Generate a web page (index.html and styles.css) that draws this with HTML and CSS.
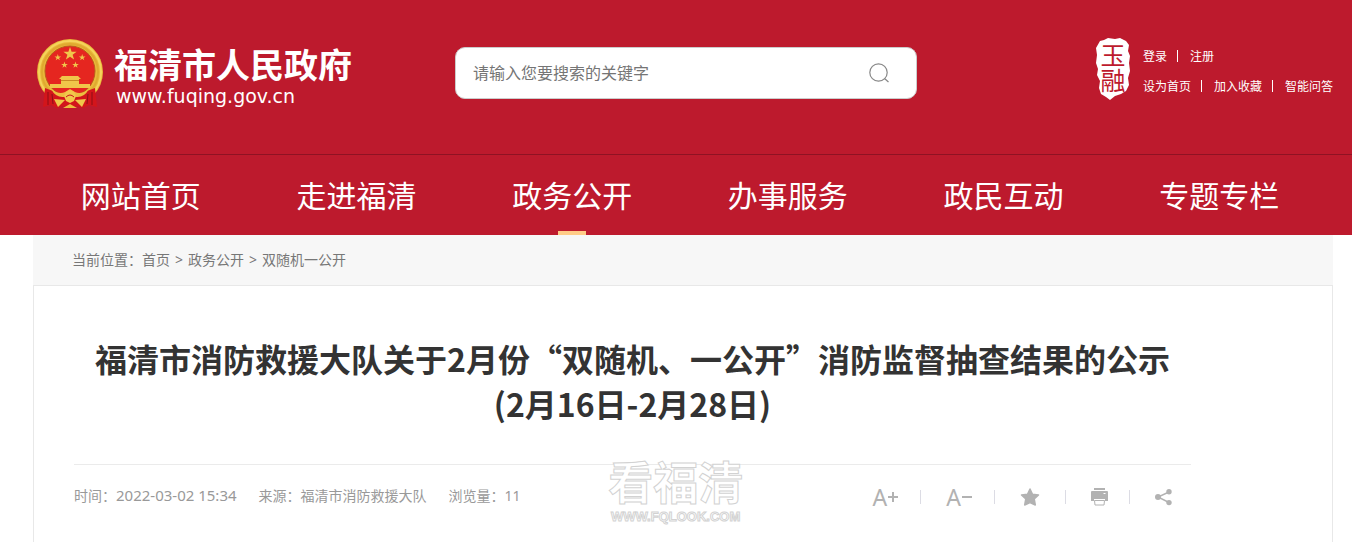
FILE: index.html
```
<!DOCTYPE html>
<html lang="zh-CN">
<head>
    <meta charset="UTF-8">
    <meta name="viewport" content="width=device-width, initial-scale=1.0">
    <title>福清市人民政府</title>
    <link rel="stylesheet" href="styles.css">
</head>
<body>
    <header class="header">
        <div class="header-top">
            <a class="logo" href="#">
                <svg class="emblem" viewBox="0 0 68 72" aria-hidden="true">
                    <circle cx="34" cy="34" r="33" fill="#e9b93a"/>
                    <circle cx="34" cy="34" r="31" fill="none" stroke="#f5d35c" stroke-width="2"/>
                    <circle cx="34" cy="34" r="28" fill="none" stroke="#dfa930" stroke-width="2"/>
                    <circle cx="34" cy="33" r="25" fill="#e52620" stroke="#bb5a1b"/>
                    <g fill="#f0c64a">
                        <path id="star" d="M34 9 L35.6 13.8 H40.6 L36.6 16.8 L38.1 21.6 L34 18.7 L29.9 21.6 L31.4 16.8 L27.4 13.8 H32.4 Z"/>
                        <use href="#star" transform="translate(4.8 11.5) scale(.5)"/>
                        <use href="#star" transform="translate(29.2 11.5) scale(.5)"/>
                        <use href="#star" transform="translate(11.5 19) scale(.5)"/>
                        <use href="#star" transform="translate(22.5 19) scale(.5)"/>
                        <path d="M26 38 H42 L45 41 H23 Z M25 41 H43 V46 H54 V50 H14 V46 H25 Z"/>
                    </g>
                    <path d="M25 42.5 H43" stroke="#c98a24"/>
                    <path d="M9 50 L17 53 Q22 58 28 58 L34 56 L40 58 Q46 58 51 53 L59 50 L61 69 L53 67 L47 70 L41 68 L34 71 L27 68 L21 70 L15 67 L7 69 Z" fill="#d3151b"/>
                    <path d="M12 54 L12 67 M16 56 L17 66 M52 56 L51 66 M56 54 L56 67" stroke="#8d0f16" stroke-width="1"/>
                    <path d="M15 51 Q23 57 29 54 L34 51 L39 54 Q45 57 53 51 Q48 60 40 59 L34 57 L28 59 Q20 60 15 51 Z" fill="#edbd40"/>
                    <path d="M18 61 L29 62 L22 69 Z M50 61 L39 62 L46 69 Z" fill="#f0c64a"/>
                    <path d="M28 58 L30 54 L34 52 L38 54 L40 58 L38 63 L34 65 L30 63 Z" fill="#f2c84b"/>
                    <path d="M30 59 Q34 55 38 59" fill="none" stroke="#c9151b"/>
                    <path d="M27 70 L34 66 L41 70 Z" fill="#edbd40"/>
                </svg>
                <span class="logo-text">
                    <span class="logo-name">福清市人民政府</span>
                    <span class="logo-url">www.fuqing.gov.cn</span>
                </span>
            </a>

            <form class="search">
                <input type="text" class="search-input" placeholder="请输入您要搜索的关键字" aria-label="搜索">
                <button type="submit" class="search-btn" aria-label="搜索">
                    <svg width="22" height="20" viewBox="0 0 22 20" fill="none" stroke="#888" stroke-width="1.2">
                        <circle cx="10.5" cy="9.5" r="8.7"/>
                        <path d="M16.5 15.5 L20.5 19"/>
                    </svg>
                </button>
            </form>

            <div class="header-right">
                <svg class="seal" viewBox="0 0 36 62" role="img" aria-label="玉融">
                    <path d="M5 3 L9 2 L13 0 L20 1 L25 0 L31 3 L34 7 L33 13 L35 18 L34 25 L35 33 L33 40 L34 47 L31 53 L26 56 L20 58 L15 62 L11 59 L6 56 L4 50 L5 43 L2 37 L3 31 L1 25 L2 17 L1 10 Z" fill="#fff"/>
                    <text x="18" y="27" text-anchor="middle">玉</text>
                    <text x="18" y="52" text-anchor="middle">融</text>
                </svg>
                <div class="top-links">
                    <div class="link-row">
                        <a href="#">登录</a><i></i><a href="#">注册</a>
                    </div>
                    <div class="link-row">
                        <a href="#">设为首页</a><i></i><a href="#">加入收藏</a><i></i><a href="#">智能问答</a>
                    </div>
                </div>
            </div>
        </div>

        <nav class="nav">
            <a href="#">网站首页</a>
            <a href="#">走进福清</a>
            <a href="#" class="active">政务公开</a>
            <a href="#">办事服务</a>
            <a href="#">政民互动</a>
            <a href="#">专题专栏</a>
        </nav>
    </header>

    <main class="container">
        <div class="breadcrumb">
            当前位置：<a href="#">首页</a><span>&gt;</span><a href="#">政务公开</a><span>&gt;</span><a href="#">双随机一公开</a>
        </div>
        <article class="article">
            <h1>福清市消防救援大队关于2月份“双随机、一公开”消防监督抽查结果的公示<br>(2月16日-2月28日)</h1>
            <div class="info">
                <div class="meta">
                    <span>时间：<time>2022-03-02 15:34</time></span>
                    <span>来源：福清市消防救援大队</span>
                    <span>浏览量：11</span>
                </div>
                <div class="tools">
                    <button type="button" aria-label="放大字体">A<svg width="12" height="12" viewBox="0 0 12 12" stroke="#b2b2b2" stroke-width="2"><path d="M1 6 H11 M6 1 V11"/></svg></button>
                    <button type="button" aria-label="缩小字体">A<svg width="12" height="12" viewBox="0 0 12 12" stroke="#b2b2b2" stroke-width="2"><path d="M1 6 H11"/></svg></button>
                    <button type="button" aria-label="收藏">
                        <svg width="24" height="20" viewBox="0 0 24 20" fill="#b2b2b2" stroke="#b2b2b2" stroke-width="1.5" stroke-linejoin="round"><path d="M10 2 L12.5 7.2 L18.5 8 L14.2 12 L15.3 18 L10 15.6 L4.7 18 L5.8 12 L1.5 8 L7.5 7.2 Z"/></svg>
                    </button>
                    <button type="button" aria-label="打印">
                        <svg width="17" height="18" viewBox="0 0 17 18" fill="#b2b2b2"><path d="M3 0 H14 V2 H3 Z M1 3 H16 Q17 3 17 4 V13 H14 V11 H3 V13 H0 V4 Q0 3 1 3 Z"/><path d="M3.5 12.5 H13.5 L13 17 H4 Z" fill="none" stroke="#b2b2b2"/><path d="M12.5 5.5 H14.5" stroke="#fff"/></svg>
                    </button>
                    <button type="button" aria-label="分享">
                        <svg width="17" height="18" viewBox="0 0 17 18" fill="#b2b2b2"><path d="M14 4 L3 9 L14 14.5" fill="none" stroke="#b2b2b2" stroke-width="1.4"/><circle cx="3" cy="9" r="3"/><circle cx="14" cy="3.7" r="2.7"/><circle cx="14" cy="14.6" r="2.7"/></svg>
                    </button>
                </div>
                <div class="watermark">
                    <span class="watermark-name">看福清</span>
                    <span class="watermark-url">WWW.FQLOOK.COM</span>
                </div>
            </div>
        </article>
    </main>
</body>
</html>
```
FILE: styles.css
```
* {
    box-sizing: border-box;
}

body {
    margin: 0;
    background-color: #fff;
    color: #333;
    font-family: "Noto Sans", "Noto Sans CJK SC", sans-serif;
    font-size: 14px;
}

a {
    color: inherit;
    text-decoration: none;
}

button {
    padding: 0;
    border: none;
    background: none;
    cursor: pointer;
}

/* Header */
.header {
    background-color: #bd1a2d;
    color: #fff;
}

.header-top {
    display: flex;
    align-items: flex-start;
    height: 154px;
    padding: 38px 19px 0 36px;
}

.logo {
    display: flex;
    width: 419px;
    gap: 10px;
}

.emblem {
    width: 68px;
    height: 72px;
}

.logo-text {
    display: flex;
    flex-direction: column;
    padding-top: 4px;
}

.logo-name {
    font-family: "Noto Sans CJK SC", sans-serif;
    font-size: 34px;
    font-weight: bold;
    line-height: 44px;
}

.logo-url {
    padding-left: 2px;
    font-family: "DejaVu Sans", sans-serif;
    font-size: 19px;
    line-height: 20px;
}

/* Search */
.search {
    display: flex;
    align-items: center;
    width: 462px;
    height: 52px;
    margin-top: 9px;
    padding: 0 26px 0 17px;
    border: 1px solid #ccc;
    border-radius: 10px;
    background-color: #fff;
}

.search-input {
    flex: 1;
    min-width: 0;
    padding: 0;
    border: none;
    outline: none;
    font-family: inherit;
    font-size: 16px;
}

.search-input::placeholder {
    color: #757575;
}

.search-btn svg {
    display: block;
}

/* Header right */
.header-right {
    display: flex;
    gap: 12px;
    margin-left: auto;
}

.seal {
    width: 36px;
    height: 62px;
}

.seal text {
    fill: #bd1a2d;
    font-family: "Noto Sans CJK SC", sans-serif;
    font-size: 25px;
}

.top-links {
    padding-top: 3px;
    font-size: 12px;
}

.link-row {
    display: flex;
    align-items: center;
    height: 30px;
}

.link-row i {
    width: 1px;
    height: 12px;
    margin: 0 12px 0 10px;
    background-color: #fff;
}

/* Nav */
.nav {
    display: grid;
    grid-template-columns: repeat(6, 1fr);
    padding: 0 25px 0 33px;
    border-top: 1px solid #8f1223;
    text-align: center;
}

.nav a {
    position: relative;
    height: 80px;
    font-size: 30px;
    line-height: 82px;
}

.nav .active::after {
    content: "";
    position: absolute;
    bottom: 0;
    left: 50%;
    width: 28px;
    height: 4px;
    margin-left: -14px;
    background-color: #ffcc87;
}

/* Content */
.container {
    margin: 0 19px 0 33px;
}

.breadcrumb {
    padding: 0 39px;
    border-bottom: 1px solid #e8e8e8;
    background-color: #f7f7f7;
    color: #777;
    line-height: 50px;
}

.breadcrumb span {
    margin: 0 5px;
}

.article {
    min-height: 256px;
    padding: 50px 141px 0 40px;
    border: 1px solid #e8e8e8;
    border-width: 0 1px;
}

.article h1 {
    margin: 0;
    padding-bottom: 38px;
    border-bottom: 1px solid #ebebeb;
    font-family: "Noto Sans CJK SC", sans-serif;
    font-size: 32px;
    font-weight: bold;
    line-height: 45px;
    text-align: center;
}

.info {
    position: relative;
    display: flex;
    align-items: center;
    justify-content: space-between;
    height: 64px;
}

.meta {
    display: flex;
    align-items: baseline;
    gap: 22px;
    padding-bottom: 4px;
    color: #999;
}

.meta time {
    font-size: 15px;
}

.tools {
    display: flex;
    align-items: center;
    padding-right: 19px;
}

.tools button {
    display: flex;
    align-items: center;
    color: #b2b2b2;
    font-family: "Noto Sans", sans-serif;
    font-size: 23px;
    line-height: 24px;
}

.tools button + button {
    margin-left: 21px;
}

.tools button + button::before {
    content: "";
    width: 1px;
    height: 14px;
    margin-right: 25px;
    background-color: #dcdce4;
}

/* Watermark over the article */
.watermark {
    position: absolute;
    top: -10px;
    left: 48%;
    display: flex;
    flex-direction: column;
    align-items: center;
    gap: 2px;
    margin-left: -2px;
    color: #fff;
    pointer-events: none;
    -webkit-text-stroke: 1px #d2d2d2;
}

.watermark-name {
    font-family: "Noto Sans CJK SC", sans-serif;
    font-size: 45px;
    font-weight: bold;
    line-height: 52px;
}

.watermark-url {
    font-family: "Liberation Sans", sans-serif;
    font-size: 13px;
    line-height: 16px;
    font-weight: bold;
}
```
